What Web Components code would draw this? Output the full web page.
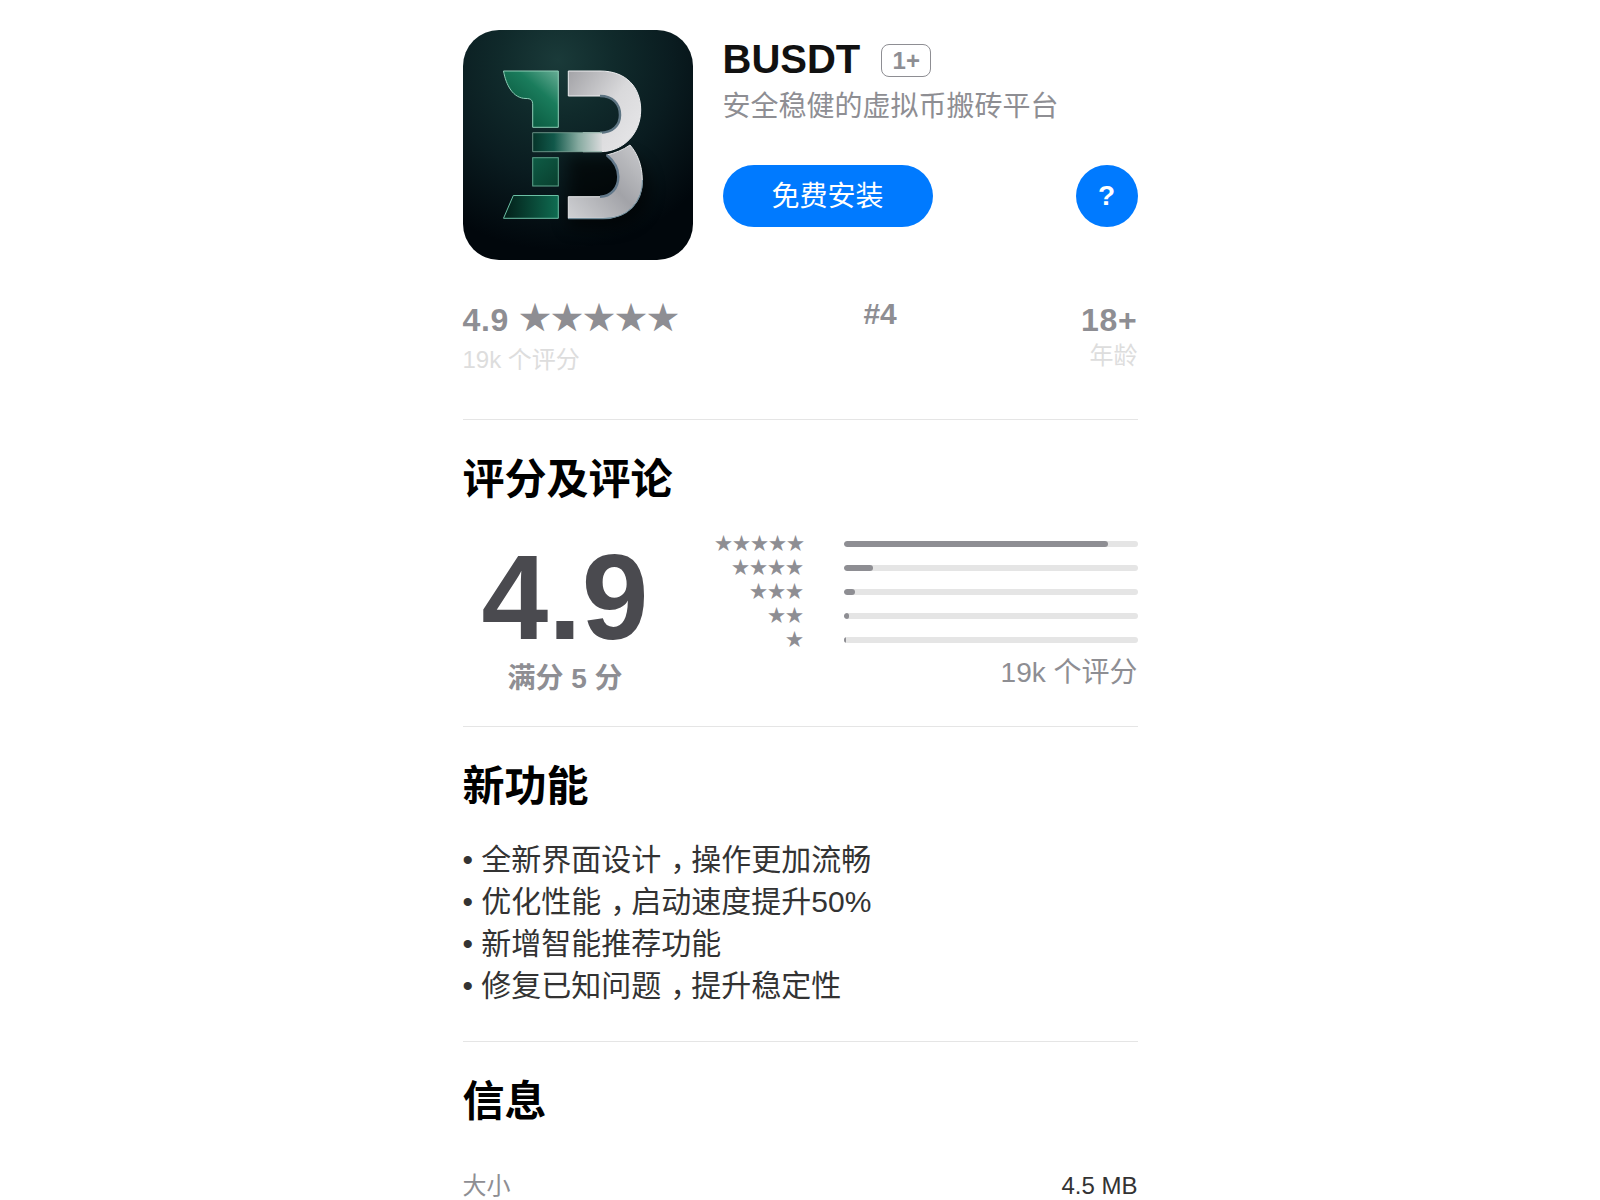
<!DOCTYPE html>
<html lang="zh">
<head>
<meta charset="utf-8">
<title>BUSDT</title>
<style>
html, body { margin: 0; background: #fff; }
body { font-family: "Liberation Sans", "Noto Sans CJK SC", sans-serif; overflow: hidden; height: 1200px; }
/* the comma sits centred in its cell in the reference */
change-list i { font-style: normal; margin-left: .3em; letter-spacing: -.3em; }
</style>
</head>
<body>
<app-page>
  <app-header name="BUSDT" age="1+" tagline="安全稳健的虚拟币搬砖平台" action="免费安装"></app-header>
  <app-stats></app-stats>
  <page-section heading="评分及评论" style="--bottom:30px"><rating-summary></rating-summary></page-section>
  <page-section heading="新功能" style="--bottom:34px">
    <change-list>
      <li>全新界面设计<i>，</i>操作更加流畅</li>
      <li>优化性能<i>，</i>启动速度提升50%</li>
      <li>新增智能推荐功能</li>
      <li>修复已知问题<i>，</i>提升稳定性</li>
    </change-list>
  </page-section>
  <page-section heading="信息" style="--bottom:0px; --rule:none">
    <info-row label="大小" value="4.5 MB"></info-row>
  </page-section>
</app-page>
<script>
class AppPage extends HTMLElement {
  connectedCallback() {
    this.attachShadow({ mode: 'open' });
    this.shadowRoot.innerHTML = `
      <style>
        :host { display: block; width: 675px; margin: 0 auto; padding-top: 30px; }
      </style>
      <slot></slot>`;
  }
}
customElements.define('app-page', AppPage);

class AppIcon extends HTMLElement {
  connectedCallback() {
    this.attachShadow({ mode: 'open' });
    this.shadowRoot.innerHTML = `
      <style>
        :host { display: block; width: 230px; height: 230px; flex: none; }
        svg { display: block; }
      </style>
      <svg width="230" height="230" viewBox="0 0 230 230">
        <defs>
          <radialGradient id="bg" gradientUnits="userSpaceOnUse" cx="95" cy="30" r="190">
            <stop offset="0" stop-color="#1a3a39"/>
            <stop offset=".3" stop-color="#102a2b"/>
            <stop offset=".6" stop-color="#0a1c20"/>
            <stop offset="1" stop-color="#01070c"/>
          </radialGradient>
          <linearGradient id="g-top" gradientUnits="userSpaceOnUse" x1="60" y1="90" x2="100" y2="45">
            <stop offset="0" stop-color="#0a5a40"/><stop offset=".55" stop-color="#1a7c5c"/><stop offset="1" stop-color="#67ad95"/>
          </linearGradient>
          <linearGradient id="g-bar" gradientUnits="userSpaceOnUse" x1="70" y1="0" x2="140" y2="0">
            <stop offset="0" stop-color="#05352a"/><stop offset=".3" stop-color="#11584a"/><stop offset=".65" stop-color="#86aaa0"/><stop offset="1" stop-color="#dcdcde"/>
          </linearGradient>
          <linearGradient id="g-sq" gradientUnits="userSpaceOnUse" x1="70" y1="128" x2="95" y2="156">
            <stop offset="0" stop-color="#0e5b45"/><stop offset="1" stop-color="#09402f"/>
          </linearGradient>
          <linearGradient id="g-low" gradientUnits="userSpaceOnUse" x1="42" y1="0" x2="96" y2="0">
            <stop offset="0" stop-color="#03201a"/><stop offset="1" stop-color="#0f6d52"/>
          </linearGradient>
          <linearGradient id="s-up" gradientUnits="userSpaceOnUse" x1="105" y1="45" x2="178" y2="95">
            <stop offset="0" stop-color="#a5a5a9"/><stop offset=".6" stop-color="#d9d9db"/><stop offset="1" stop-color="#e4e4e6"/>
          </linearGradient>
          <linearGradient id="s-low" gradientUnits="userSpaceOnUse" x1="105" y1="188" x2="178" y2="120">
            <stop offset="0" stop-color="#d0d1d4"/><stop offset=".55" stop-color="#a2a3a8"/><stop offset="1" stop-color="#c6c7ca"/>
          </linearGradient>
          <filter id="soft" x="-40%" y="-40%" width="180%" height="180%"><feGaussianBlur stdDeviation="8"/></filter>
          <clipPath id="round"><rect width="230" height="230" rx="36"/></clipPath>
        </defs>
        <g clip-path="url(#round)">
          <rect width="230" height="230" fill="url(#bg)"/>
          <path d="M105 125 H150 C176 125 186 140 186 160 C186 186 165 198 140 198 H105Z" fill="#000" opacity=".6" filter="url(#soft)"/>
          <!-- green half -->
          <path d="M40.5 41 H95.3 V97.3 H69.7 V75 C69.7 70 68 68.5 63 68.5 C50 68.5 43 55 40.5 41Z" fill="url(#g-top)" stroke="#8fd0b8" stroke-width="1"/>
          <rect x="69.7" y="127.7" width="25.6" height="28.3" fill="url(#g-sq)" stroke="#5fa58d" stroke-width="1"/>
          <path d="M50.3 165.5 H95.3 V188.3 H40.5Z" fill="url(#g-low)" stroke="#6cc0a5" stroke-width="1"/>
          <!-- silver bowls -->
          <path d="M105.3 41 H137 C164 41 177.7 58 177.7 80 C177.7 104 160 121.7 137 121.7 H120 V102.7 H137 C150 102.7 157 95 157 85 C157 74 150 66 137 66 H105.3Z" fill="url(#s-up)" stroke="#eeeef0" stroke-width="1"/>
          <path d="M137 66 C150 66 157 74 157 85 C157 95 150 102.7 137 102.7" fill="none" stroke="#5d7482" stroke-width="2.5"/>
          <path d="M69.7 102.7 H139 V121.7 H69.7Z" fill="url(#g-bar)"/>
          <path d="M139 102.7 H69.7 V121.7 H139" fill="none" stroke="#7fa89a" stroke-width=".8"/>
          <path d="M105.3 188.3 H140 C165 188.3 179.3 172 179.3 150 C179.3 135 174 123 167 115 C160 120 152 123 143.7 125 C151 131 155.3 138 155.3 146.7 C155.3 158 148 166.7 137 166.7 H105.3Z" fill="url(#s-low)" stroke="#e6e7e9" stroke-width="1"/>
          <path d="M143.7 125 C151 131 155.3 138 155.3 146.7 C155.3 158 148 166.7 137 166.7" fill="none" stroke="#62788a" stroke-width="2.5"/>
          <path d="M105.3 188.6 H140 C165 188.6 179.5 172 179.5 150" fill="none" stroke="#6f8a98" stroke-width="1.2"/>
        </g>
      </svg>`;
  }
}
customElements.define('app-icon', AppIcon);

class AppHeader extends HTMLElement {
  connectedCallback() {
    const shadow = this.attachShadow({ mode: 'open' });
    shadow.innerHTML = `
      <style>
        :host { display: flex; gap: 30px; }
        .info { flex: 1; display: flex; flex-direction: column; }
        .top { display: flex; align-items: center; gap: 21px; height: 56px; margin-top: 1px; }
        h1 { margin: 0; font-size: 40px; font-weight: 700; color: #111; line-height: 56px; }
        .age { font-size: 24px; font-weight: 700; color: #8e8e93; border: 1px solid #8e8e93; border-radius: 8px; width: 48px; height: 31px; line-height: 31px; text-align: center; margin-top: 3px; }
        p { margin: 3px 0 0; font-size: 28px; line-height: 34px; color: #8e8e93; }
        .actions { display: flex; justify-content: space-between; margin-top: 41px; }
        .install { width: 210px; height: 62px; border-radius: 31px; background: #007aff; color: #fff; font-size: 28px; line-height: 64px; text-align: center; }
        .help { width: 62px; height: 62px; border-radius: 50%; background: #007aff; color: #fff; font-size: 28px; font-weight: 700; line-height: 62px; text-align: center; }
      </style>
      <app-icon></app-icon>
      <div class="info">
        <div class="top"><h1></h1><span class="age"></span></div>
        <p></p>
        <div class="actions"><div class="install"></div><div class="help">?</div></div>
      </div>`;
    shadow.querySelector('h1').textContent = this.getAttribute('name');
    shadow.querySelector('.age').textContent = this.getAttribute('age');
    shadow.querySelector('p').textContent = this.getAttribute('tagline');
    shadow.querySelector('.install').textContent = this.getAttribute('action');
  }
}
customElements.define('app-header', AppHeader);

class AppStats extends HTMLElement {
  connectedCallback() {
    this.attachShadow({ mode: 'open' });
    this.shadowRoot.innerHTML = `
      <style>
        :host { display: flex; justify-content: space-between; height: 119px; margin-top: 40px; border-bottom: 1px solid #e5e5e5; color: #8e8e93; }
        .big { font-size: 32px; font-weight: 700; line-height: 40px; letter-spacing: .7px; }
        .sub { font-size: 24px; line-height: 30px; color: #ddd; }
        .rating .row { display: flex; align-items: flex-start; gap: 10px; height: 45px; }
        .stars { font-family: "Noto Sans CJK SC", sans-serif; font-size: 32px; line-height: 31px; }
        .rank { font-size: 30px; line-height: 28px; font-weight: 700; }
        .age { text-align: right; }
        .age .sub { margin-top: 1px; }
      </style>
      <div class="rating"><div class="row"><span class="big">4.9</span><span class="stars">★★★★★</span></div><div class="sub">19k 个评分</div></div>
      <div class="rank">#4</div>
      <div class="age"><div class="big">18+</div><div class="sub">年龄</div></div>`;
  }
}
customElements.define('app-stats', AppStats);

class PageSection extends HTMLElement {
  connectedCallback() {
    const shadow = this.attachShadow({ mode: 'open' });
    shadow.innerHTML = `
      <style>
        :host { display: block; padding-top: 36px; padding-bottom: var(--bottom, 30px); border-bottom: var(--rule, 1px solid #e5e5e5); }
        h2 { margin: 0 0 28px; font-size: 42px; line-height: 48px; font-weight: 700; color: #000; }
      </style>
      <h2></h2><slot></slot>`;
    shadow.querySelector('h2').textContent = this.getAttribute('heading');
  }
}
customElements.define('page-section', PageSection);

class RatingSummary extends HTMLElement {
  connectedCallback() {
    const rows = [[5, 90], [4, 10], [3, 4], [2, 2], [1, 1]];
    this.attachShadow({ mode: 'open' });
    this.shadowRoot.innerHTML = `
      <style>
        :host { display: flex; justify-content: space-between; color: #8e8e93; }
        .score { width: 205px; text-align: center; padding-top: 5px; }
        .num { font-size: 120px; line-height: 120px; font-weight: 700; color: #4a4a4f; }
        .out { font-size: 28px; line-height: 34px; font-weight: 700; margin-top: 5px; }
        .dist { width: 423px; }
        .row { display: flex; align-items: center; gap: 40px; height: 24px; }
        .stars { width: 89px; text-align: right; font-family: "Noto Sans CJK SC", sans-serif; font-size: 18px; line-height: 20px; padding-bottom: 4px; white-space: nowrap; }
        .track { flex: 1; height: 6px; border-radius: 3px; background: #e5e5e5; overflow: hidden; }
        .fill { height: 100%; border-radius: 3px; background: #8e8e93; }
        .count { font-size: 28px; line-height: 34px; text-align: right; margin-top: 4px; }
      </style>
      <div class="score"><div class="num">4.9</div><div class="out">满分 5 分</div></div>
      <div class="dist">
        ${rows.map(([n, p]) => `<div class="row"><div class="stars">${'★'.repeat(n)}</div><div class="track"><div class="fill" style="width:${p}%"></div></div></div>`).join('')}
        <div class="count">19k 个评分</div>
      </div>`;
  }
}
customElements.define('rating-summary', RatingSummary);

class ChangeList extends HTMLElement {
  connectedCallback() {
    this.attachShadow({ mode: 'open' });
    this.shadowRoot.innerHTML = `
      <style>
        :host { display: block; font-size: 30px; line-height: 42px; color: #333; }
        ::slotted(li) { list-style: none; }
        ::slotted(li)::before { content: "• "; }
      </style>
      <slot></slot>`;
  }
}
customElements.define('change-list', ChangeList);

class InfoRow extends HTMLElement {
  connectedCallback() {
    const shadow = this.attachShadow({ mode: 'open' });
    shadow.innerHTML = `
      <style>
        :host { display: flex; justify-content: space-between; font-size: 24px; line-height: 32px; padding-top: 16px; }
        .l { color: #8e8e93; }
        .v { color: #333; }
      </style>
      <span class="l"></span><span class="v"></span>`;
    shadow.querySelector('.l').textContent = this.getAttribute('label');
    shadow.querySelector('.v').textContent = this.getAttribute('value');
  }
}
customElements.define('info-row', InfoRow);
</script>
</body>
</html>
